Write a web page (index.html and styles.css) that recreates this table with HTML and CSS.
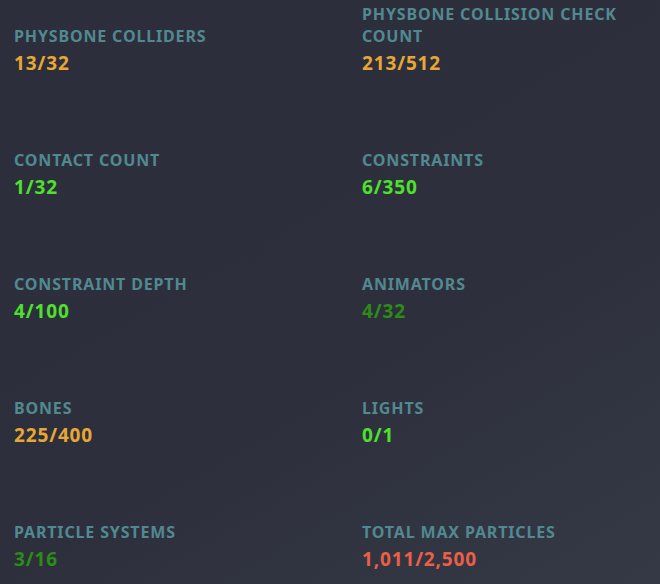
FILE: index.html
```html
<!DOCTYPE html>
<html>
<head>
<meta charset="utf-8">
<link rel="stylesheet" href="styles.css">
</head>
<body>
<div class="stats">
  <div class="stat"><div class="label">PHYSBONE COLLIDERS</div><div class="value warn">13/32</div></div>
  <div class="stat"><div class="label">PHYSBONE COLLISION CHECK COUNT</div><div class="value warn">213/512</div></div>
  <div class="stat"><div class="label">CONTACT COUNT</div><div class="value good">1/32</div></div>
  <div class="stat"><div class="label">CONSTRAINTS</div><div class="value good">6/350</div></div>
  <div class="stat"><div class="label">CONSTRAINT DEPTH</div><div class="value good">4/100</div></div>
  <div class="stat"><div class="label">ANIMATORS</div><div class="value ok">4/32</div></div>
  <div class="stat"><div class="label">BONES</div><div class="value warn">225/400</div></div>
  <div class="stat"><div class="label">LIGHTS</div><div class="value good">0/1</div></div>
  <div class="stat"><div class="label">PARTICLE SYSTEMS</div><div class="value ok">3/16</div></div>
  <div class="stat"><div class="label">TOTAL MAX PARTICLES</div><div class="value bad">1,011/2,500</div></div>
</div>
</body>
</html>
```
FILE: styles.css
```css
html, body {
  margin: 0;
  height: 100%;
}
body {
  background: linear-gradient(150deg, #2c2f3b 0%, #2d303c 60%, #353946 100%);
  font-family: "Noto Sans", "Open Sans", sans-serif;
  overflow: hidden;
}
.stats {
  display: grid;
  grid-template-columns: 348px 1fr;
  grid-auto-rows: 1fr;
  row-gap: 50px;
  align-items: end;
  padding: 3px 14px 0 14px;
}
.stat {
  display: flex;
  flex-direction: column;
}
.label {
  font-size: 16px;
  font-weight: 700;
  line-height: 22px;
  letter-spacing: 0.85px;
  color: #528990;
  padding-right: 20px;
}
.value {
  font-size: 19px;
  font-weight: 700;
  line-height: 28px;
  letter-spacing: 0.85px;
  margin-top: 2px;
}
.warn { color: #e6a734; }
.good { color: #4fe02c; }
.ok { color: #2b8c16; }
.bad { color: #ea5f48; }
```
